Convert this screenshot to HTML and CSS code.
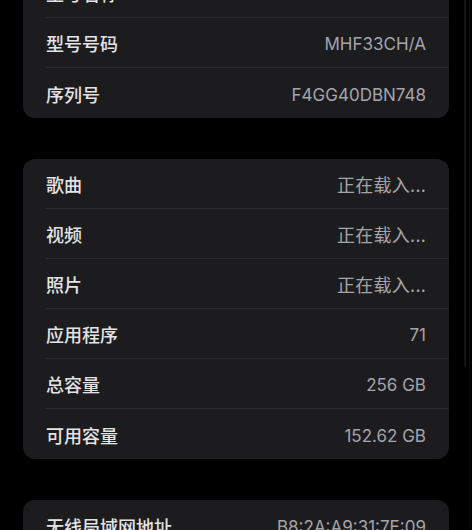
FILE: index.html
```html
<!DOCTYPE html>
<html lang="zh-CN">
<head>
<meta charset="utf-8">
<title>关于本机</title>
<link rel="stylesheet" href="styles.css">
</head>
<body>
<div class="page">
  <section class="card card-first">
    <div class="row"><span class="label">型号名称</span><span class="value">iPhone 11</span></div>
    <div class="row"><span class="label">型号号码</span><span class="value">MHF33CH/A</span></div>
    <div class="row"><span class="label">序列号</span><span class="value">F4GG40DBN748</span></div>
  </section>
  <section class="card">
    <div class="row"><span class="label">歌曲</span><span class="value cjk">正在载入...</span></div>
    <div class="row"><span class="label">视频</span><span class="value cjk">正在载入...</span></div>
    <div class="row"><span class="label">照片</span><span class="value cjk">正在载入...</span></div>
    <div class="row"><span class="label">应用程序</span><span class="value">71</span></div>
    <div class="row"><span class="label">总容量</span><span class="value">256 GB</span></div>
    <div class="row"><span class="label">可用容量</span><span class="value">152.62 GB</span></div>
  </section>
  <section class="card">
    <div class="row"><span class="label">无线局域网地址</span><span class="value">B8:2A:A9:31:7E:09</span></div>
  </section>
</div>
<div class="scroll-indicator"></div>
<div class="edge-line"></div>
</body>
</html>
```

FILE: styles.css
```css
html, body {
  margin: 0;
  padding: 0;
  background: #000;
  overflow: hidden;
}

body {
  font-family: "Inter", "Noto Sans CJK SC", sans-serif;
  -webkit-font-smoothing: antialiased;
}

.page {
  padding: 0 23px;
  margin-top: -32px;
}

.card {
  background: #1c1c1e;
  border-radius: 12px;
  margin-bottom: 41px;
  overflow: hidden;
}

.row {
  box-sizing: border-box;
  height: 50px;
  margin-left: 23px;
  padding-right: 23px;
  display: flex;
  align-items: center;
  justify-content: space-between;
  border-bottom: 1px solid #2c2c2e;
}

.row:last-child {
  border-bottom: none;
}

.label {
  font-family: "Noto Sans CJK SC", sans-serif;
  font-size: 18px;
  font-weight: 500;
  color: #e4e4e6;
  padding-top: 1px;
}

.value {
  font-family: "Inter", "Noto Sans CJK SC", sans-serif;
  font-size: 17px;
  color: #a4a4aa;
  padding-top: 3px;
}

.value.cjk {
  font-family: "Noto Sans CJK SC", sans-serif;
  font-size: 18px;
  letter-spacing: 0.3px;
  padding-top: 1px;
}

.scroll-indicator {
  position: fixed;
  left: 464px;
  top: 0;
  width: 2px;
  height: 367px;
  background: #141414;
  border-radius: 1px;
}

.edge-line {
  position: fixed;
  left: 469px;
  top: 0;
  width: 1px;
  height: 530px;
  background: #0a0a0a;
}
```
